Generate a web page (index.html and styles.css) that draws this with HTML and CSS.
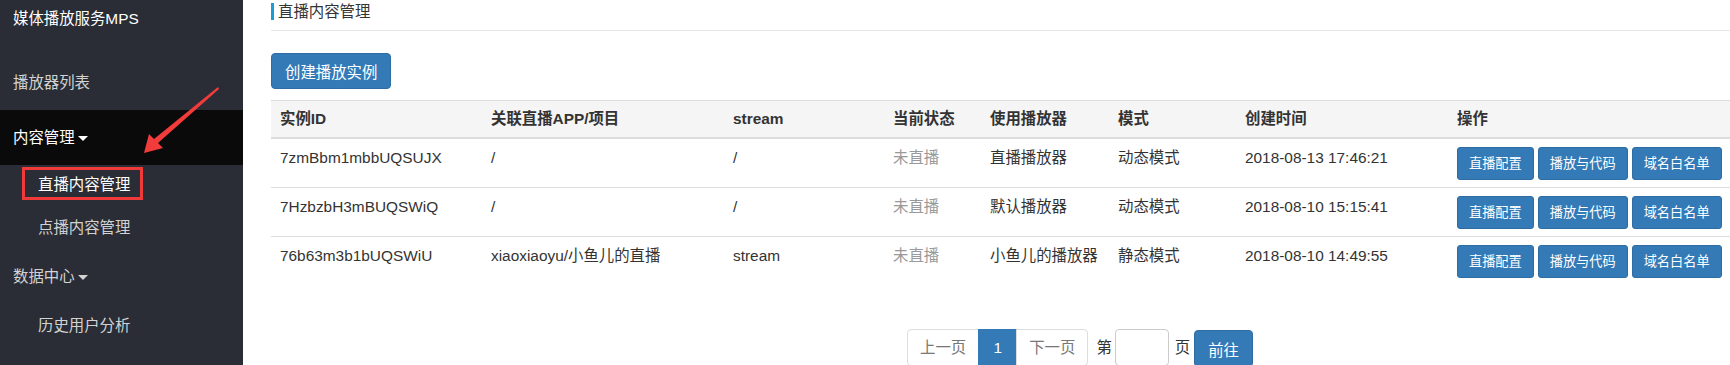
FILE: index.html
```html
<!DOCTYPE html>
<html lang="zh-CN">
<head>
    <meta charset="UTF-8">
    <meta name="viewport" content="width=device-width, initial-scale=1.0">
    <title>直播内容管理 - 媒体播放服务MPS</title>
    <link rel="stylesheet" href="styles.css">
</head>
<body>
    <div class="layout">
        <aside class="sidebar">
            <div class="brand">媒体播放服务MPS</div>
            <ul class="menu">
                <li class="menu-item">播放器列表</li>
                <li class="menu-item open">内容管理<span class="caret"></span></li>
                <li class="sub-item current"><span class="mark">直播内容管理</span></li>
                <li class="sub-item">点播内容管理</li>
                <li class="menu-item">数据中心<span class="caret"></span></li>
                <li class="sub-item">历史用户分析</li>
            </ul>
            <!-- annotation arrow pointing at the current page -->
            <svg class="arrow" width="243" height="365" viewBox="0 0 243 365">
                <polygon points="218,87 219,89 158,143 163,148 144,153 149,134 154,139" fill="#f23b3b"/>
            </svg>
        </aside>

        <main class="content">
            <div class="page-title"><span>直播内容管理</span></div>

            <button class="btn btn-create">创建播放实例</button>

            <table class="data-table">
                <colgroup>
                    <col class="col-id">
                    <col class="col-app">
                    <col class="col-stream">
                    <col class="col-status">
                    <col class="col-player">
                    <col class="col-mode">
                    <col class="col-time">
                    <col class="col-ops">
                </colgroup>
                <thead>
                    <tr>
                        <th>实例ID</th>
                        <th>关联直播APP/项目</th>
                        <th>stream</th>
                        <th>当前状态</th>
                        <th>使用播放器</th>
                        <th>模式</th>
                        <th>创建时间</th>
                        <th>操作</th>
                    </tr>
                </thead>
                <tbody>
                    <tr>
                        <td>7zmBbm1mbbUQSUJX</td>
                        <td>/</td>
                        <td>/</td>
                        <td class="status">未直播</td>
                        <td>直播播放器</td>
                        <td>动态模式</td>
                        <td>2018-08-13 17:46:21</td>
                        <td>
                            <div class="ops">
                                <button class="btn btn-sm">直播配置</button>
                                <button class="btn btn-sm">播放与代码</button>
                                <button class="btn btn-sm">域名白名单</button>
                            </div>
                        </td>
                    </tr>
                    <tr>
                        <td>7HzbzbH3mBUQSWiQ</td>
                        <td>/</td>
                        <td>/</td>
                        <td class="status">未直播</td>
                        <td>默认播放器</td>
                        <td>动态模式</td>
                        <td>2018-08-10 15:15:41</td>
                        <td>
                            <div class="ops">
                                <button class="btn btn-sm">直播配置</button>
                                <button class="btn btn-sm">播放与代码</button>
                                <button class="btn btn-sm">域名白名单</button>
                            </div>
                        </td>
                    </tr>
                    <tr>
                        <td>76b63m3b1bUQSWiU</td>
                        <td>xiaoxiaoyu/小鱼儿的直播</td>
                        <td>stream</td>
                        <td class="status">未直播</td>
                        <td>小鱼儿的播放器</td>
                        <td>静态模式</td>
                        <td>2018-08-10 14:49:55</td>
                        <td>
                            <div class="ops">
                                <button class="btn btn-sm">直播配置</button>
                                <button class="btn btn-sm">播放与代码</button>
                                <button class="btn btn-sm">域名白名单</button>
                            </div>
                        </td>
                    </tr>
                </tbody>
            </table>

            <div class="pager">
                <ul class="pagination">
                    <li>上一页</li>
                    <li class="active">1</li>
                    <li>下一页</li>
                </ul>
                <span class="pager-text first">第</span>
                <input class="page-input" type="text">
                <span class="pager-text last">页</span>
                <button class="btn btn-go">前往</button>
            </div>
        </main>
    </div>
</body>
</html>
```

FILE: styles.css
```css
* {
    box-sizing: border-box;
}

body {
    margin: 0;
    font-family: "Liberation Sans", "Noto Sans CJK SC", sans-serif;
    font-size: 15.4px;
    color: #333;
    background: #fff;
    overflow: hidden;
}

.layout {
    display: flex;
    height: 365px;
}

/* sidebar */
.sidebar {
    position: relative;
    width: 243px;
    flex-shrink: 0;
    background-color: #2a2d35;
    color: #d2d2d2;
}

.brand {
    height: 38px;
    line-height: 38px;
    margin-bottom: 17px;
    padding-left: 13px;
    color: #fff;
}

.menu {
    list-style: none;
    margin: 0;
    padding: 0;
}

.menu-item {
    height: 55px;
    line-height: 55px;
    padding-left: 13px;
}

.menu-item.open {
    background-color: #0a0a0a;
    color: #fff;
}

.caret {
    display: inline-block;
    width: 0;
    height: 0;
    margin-left: 3px;
    vertical-align: middle;
    border-top: 5px solid;
    border-left: 5px solid transparent;
    border-right: 5px solid transparent;
}

.sub-item {
    height: 42px;
    line-height: 42px;
    padding-left: 38px;
}

.sub-item:last-child {
    height: 43px;
    line-height: 43px;
}

.sub-item.current {
    display: flex;
    align-items: flex-start;
    padding: 2px 0 0 22px;
    color: #fff;
}

.mark {
    display: inline-block;
    line-height: 22px;
    padding: 4px 10px 1px 13px;
    border: 3px solid #f03a3a;
}

.arrow {
    position: absolute;
    left: 0;
    top: 0;
    pointer-events: none;
}

/* main area */
.content {
    flex: 1;
    min-width: 0;
    padding-left: 28px;
}

.page-title {
    height: 31px;
    padding-top: 3px;
    border-bottom: 1px solid #e6e6e6;
}

.page-title span {
    display: block;
    line-height: 17px;
    padding-left: 4px;
    border-left: 3px solid #1e9bd7;
}

.btn {
    font-family: inherit;
    color: #fff;
    background-color: #337ab7;
    border: 1px solid #2e6da4;
    cursor: pointer;
}

.btn-create {
    display: block;
    height: 36px;
    margin-top: 22px;
    padding: 0 13px;
    font-size: 15.4px;
    border-radius: 4px;
}

/* table */
.data-table {
    width: 1459px;
    margin-top: 11px;
    border-collapse: collapse;
    table-layout: fixed;
}

.col-id { width: 211px; }
.col-app { width: 242px; }
.col-stream { width: 160px; }
.col-status { width: 97px; }
.col-player { width: 128px; }
.col-mode { width: 127px; }
.col-time { width: 212px; }
.col-ops { width: 282px; }

.data-table th {
    text-align: left;
    font-weight: bold;
    line-height: 22px;
    padding: 7px 9px;
    background-color: #f5f5f5;
    border-top: 1px solid #ddd;
    border-bottom: 2px solid #ddd;
}

.data-table td {
    line-height: 22px;
    padding: 8px 9px 7px;
    vertical-align: top;
    border-top: 1px solid #ddd;
    white-space: nowrap;
}

.data-table .status {
    color: #999;
}

.ops {
    display: flex;
    gap: 4px;
}

.btn-sm {
    height: 33px;
    padding: 0 11px;
    font-size: 13.2px;
    line-height: 31px;
    border-radius: 3px;
}

/* pagination */
.pager {
    display: flex;
    align-items: flex-start;
    margin: 44px 0 0 636px;
}

.pagination {
    display: flex;
    list-style: none;
    margin: 0;
    padding: 0;
}

.pagination li {
    height: 37px;
    line-height: 35px;
    padding: 0 12px;
    color: #777;
    border: 1px solid #ddd;
    margin-left: -1px;
}

.pagination li:first-child {
    margin-left: 0;
    border-radius: 4px 0 0 4px;
}

.pagination li:last-child {
    border-radius: 0 4px 4px 0;
}

.pagination li.active {
    width: 39px;
    padding: 0;
    text-align: center;
    color: #fff;
    background-color: #337ab7;
    border-color: #337ab7;
}

.pager-text {
    line-height: 37px;
}

.pager-text.first {
    margin: 0 3px 0 8px;
}

.pager-text.last {
    margin: 0 4px 0 6px;
}

.page-input {
    width: 54px;
    height: 37px;
    border: 1px solid #ccc;
    border-radius: 4px;
}

.btn-go {
    height: 37px;
    margin-top: 1px;
    padding: 0 13px;
    font-size: 15.4px;
    border-radius: 4px;
}
```
